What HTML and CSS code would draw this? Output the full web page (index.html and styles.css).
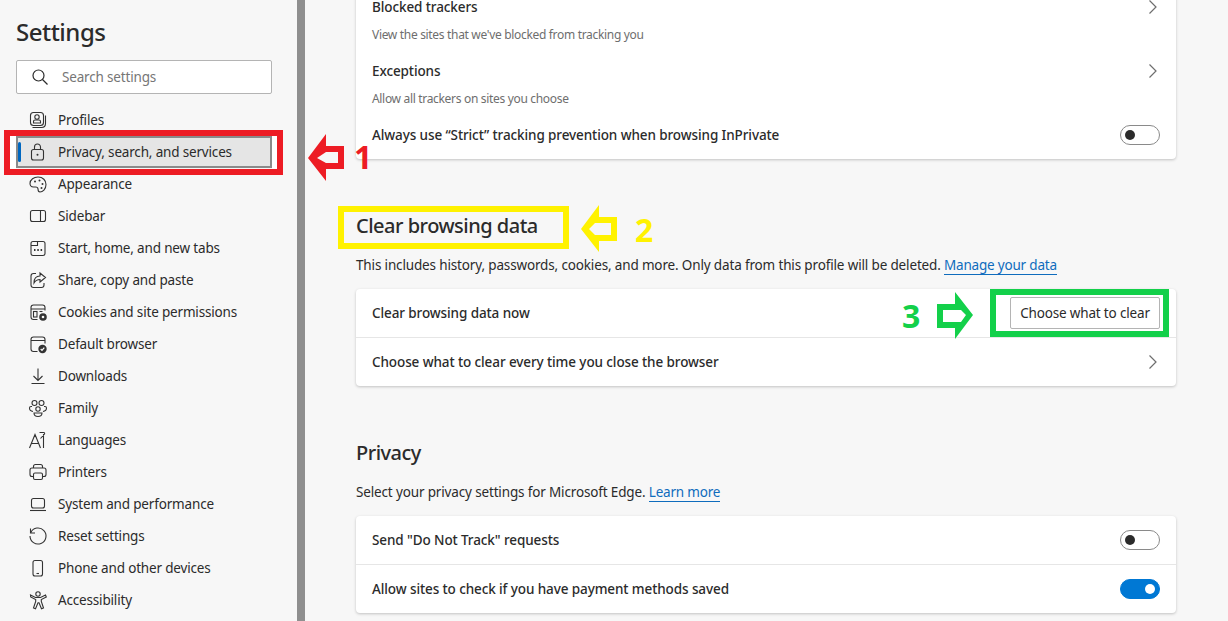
FILE: index.html
```html
<!DOCTYPE html>
<html>
	<head>
		<meta charset="utf-8">
		<title>Settings</title>
		<link rel="stylesheet" href="styles.css">
	</head>
	<body>
		<div class="page">
			<div class="sidebar">
				<div class="sideTitle">Settings</div>
				<div class="search">
					<svg class="searchIcon" width="16" height="16" viewBox="0 0 16 16"><circle cx="6.5" cy="6.5" r="5.5"/><path d="M10.5 10.5L15.5 15.5"/></svg>
					<span>Search settings</span>
				</div>
				<div class="nav">
					<div class="navItem">
						<svg width="20" height="20" viewBox="0 0 20 20"><rect x="2.5" y="2.5" width="13" height="13" rx="3"/><path d="M4.5 17.5h9q4 0 4-4v-8"/><circle cx="9" cy="7" r="2.2"/><path d="M5.5 13v-1.500q0-1.500 1.500-1.500h4q1.500 0 1.500 1.500v1.500z"/></svg>
						<span>Profiles</span>
					</div>
					<div class="navItem navItemOn">
						<svg width="20" height="20" viewBox="0 0 20 20"><rect x="3.500" y="7.500" width="12" height="10.500" rx="2"/><path d="M6.500 7.500v-2.500a3 3 0 0 1 6 0v2.500"/><circle class="dot" cx="9.500" cy="12.800" r="1"/></svg>
						<span>Privacy, search, and services</span>
					</div>
					<div class="navItem">
						<svg width="20" height="20" viewBox="0 0 20 20"><path d="M2 9.500c0-4 4-6.500 8-6.500 5 0 8 3.500 8 7.500 0 5-3.500 7.500-6 7.500-2 0-2-1.500-2-3s-1-2-2.500-2h-2c-2.500 0-3.500-1.500-3.500-3.500z"/><circle class="dot" cx="7" cy="7.500" r="1"/><circle class="dot" cx="11.500" cy="6.500" r="1"/><circle class="dot" cx="14.500" cy="10" r="1"/><circle class="dot" cx="13.500" cy="14" r="1"/></svg>
						<span>Appearance</span>
					</div>
					<div class="navItem">
						<svg width="20" height="20" viewBox="0 0 20 20"><rect x="2.500" y="4.500" width="15" height="11" rx="2"/><path d="M12.500 4.500v11"/></svg>
						<span>Sidebar</span>
					</div>
					<div class="navItem">
						<svg width="20" height="20" viewBox="0 0 20 20"><path d="M5 3.500h10q2 0 2 2v10q0 2-2 2h-10q-2 0-2-2v-10q0-2 2-2zM3 7.500h6.500v-4"/><path class="thick" d="M6 12h1.500M9.300 12h1.500M12.600 12h1.500"/></svg>
						<span>Start, home, and new tabs</span>
					</div>
					<div class="navItem">
						<svg width="20" height="20" viewBox="0 0 20 20"><path d="M8 3.500h-2.500q-2.500 0-2.500 2.500v9q0 2.500 2.500 2.500h8q2.500 0 2.500-2.500v-2"/><path d="M12 3l5.500 4.500-5.500 4.500v-2.500c-3 0-4.500 1-6 3.500 0-4.500 2.500-7 6-7z"/></svg>
						<span>Share, copy and paste</span>
					</div>
					<div class="navItem">
						<svg width="20" height="20" viewBox="0 0 20 20"><path d="M9.500 17.500h-4q-2.500 0-2.500-2.500v-9.500q0-2.500 2.500-2.500h9q2.500 0 2.500 2.500v3M3 7h14"/><rect x="5.500" y="9.500" width="3.500" height="5.500"/><path d="M11.500 9.500h3"/><circle class="dot" cx="15" cy="15" r="3.800"/><circle class="hole" cx="15" cy="15" r="1.300"/></svg>
						<span>Cookies and site permissions</span>
					</div>
					<div class="navItem">
						<svg width="20" height="20" viewBox="0 0 20 20"><path d="M9.500 17.500h-4q-2.500 0-2.500-2.500v-9.500q0-2.500 2.500-2.500h9q2.500 0 2.500 2.500v4M3 6.500h14"/><circle class="dot" cx="14.500" cy="15" r="4.200"/><path class="tick" d="M12.700 15l1.300 1.300 2.300-2.600"/></svg>
						<span>Default browser</span>
					</div>
					<div class="navItem">
						<svg width="20" height="20" viewBox="0 0 20 20"><path d="M10 2.500v12M5.500 10l4.500 4.500 4.500-4.500M3.500 17.500h13"/></svg>
						<span>Downloads</span>
					</div>
					<div class="navItem">
						<svg width="20" height="20" viewBox="0 0 20 20"><circle cx="6.500" cy="5" r="2.500"/><circle cx="13.500" cy="5" r="2.500"/><circle cx="10" cy="11" r="2.200"/><path d="M4 8.500h-1q-1.500 0-1.500 1.500 0 3 3.500 3.500M16 8.500h1q1.500 0 1.500 1.500 0 3-3.500 3.500M6 15h8q0 3.500-4 3.500t-4-3.500z"/></svg>
						<span>Family</span>
					</div>
					<div class="navItem">
						<svg width="20" height="20" viewBox="0 0 20 20"><path d="M1.500 18l5.500-13.500 5.500 13.500M3.500 13.500h7.500M11.500 2.500h4q1.500 0 1 1.500l-4 4.500M15.500 4v14"/></svg>
						<span>Languages</span>
					</div>
					<div class="navItem">
						<svg width="20" height="20" viewBox="0 0 20 20"><path d="M5.500 6v-1.500q0-2 2-2h5q2 0 2 2v1.500M5.500 14.500h-1.500q-2 0-2-2v-4.500q0-2 2-2h12q2 0 2 2v4.500q0 2-2 2h-1.500"/><rect x="5.500" y="11" width="9" height="6.500" rx="1.500"/></svg>
						<span>Printers</span>
					</div>
					<div class="navItem">
						<svg width="20" height="20" viewBox="0 0 20 20"><rect x="3.500" y="4.500" width="13" height="9.500" rx="2"/><path d="M2 16.500h16"/></svg>
						<span>System and performance</span>
					</div>
					<div class="navItem">
						<svg width="20" height="20" viewBox="0 0 20 20"><path d="M2.800 6.500a8 8 0 1 1-.800 3.500M2.500 2.500v4.500h4.500"/></svg>
						<span>Reset settings</span>
					</div>
					<div class="navItem">
						<svg width="20" height="20" viewBox="0 0 20 20"><rect x="5" y="2.500" width="9.500" height="15.500" rx="2"/><path d="M8.500 15.500h2.500"/></svg>
						<span>Phone and other devices</span>
					</div>
					<div class="navItem">
						<svg width="20" height="20" viewBox="0 0 20 20"><circle cx="10" cy="4" r="2.200"/><path d="M2.500 5l5 2.500h5l5-2.500 .800 2-5 2.500v2l2.200 6.500-2 .700-2.500-6h-1l-2.500 6-2-.700 2.200-6.500v-2l-5-2.500z"/></svg>
						<span>Accessibility</span>
					</div>
				</div>
			</div>
			<div class="divider"></div>
			<div class="main">
				<div class="card cardTop">
					<div class="subRow">
						<div class="rowHead"><span class="rowLabel">Blocked trackers</span><svg class="chev" width="10" height="16" viewBox="0 0 10 16"><path d="M1.500 1.500L8 8l-6.500 6.500"/></svg></div>
						<div class="rowSub">View the sites that we've blocked from tracking you</div>
					</div>
					<div class="subRow">
						<div class="rowHead"><span class="rowLabel">Exceptions</span><svg class="chev" width="10" height="16" viewBox="0 0 10 16"><path d="M1.500 1.500L8 8l-6.500 6.500"/></svg></div>
						<div class="rowSub">Allow all trackers on sites you choose</div>
					</div>
					<div class="row">
						<span class="rowLabel">Always use “Strict” tracking prevention when browsing InPrivate</span>
						<div class="toggle"><div class="knob"></div></div>
					</div>
				</div>

				<div class="heading headingClear">Clear browsing data</div>
				<div class="desc">This includes history, passwords, cookies, and more. Only data from this profile will be deleted. <a class="link">Manage your data</a></div>
				<div class="card">
					<div class="row rowLine">
						<span class="rowLabel">Clear browsing data now</span>
						<div class="btn">Choose what to clear</div>
					</div>
					<div class="row">
						<span class="rowLabel">Choose what to clear every time you close the browser</span>
						<svg class="chev" width="10" height="16" viewBox="0 0 10 16"><path d="M1.500 1.500L8 8l-6.500 6.500"/></svg>
					</div>
				</div>

				<div class="heading headingPrivacy">Privacy</div>
				<div class="desc">Select your privacy settings for Microsoft Edge. <a class="link">Learn more</a></div>
				<div class="card">
					<div class="row rowLine">
						<span class="rowLabel">Send "Do Not Track" requests</span>
						<div class="toggle"><div class="knob"></div></div>
					</div>
					<div class="row">
						<span class="rowLabel">Allow sites to check if you have payment methods saved</span>
						<div class="toggle toggleOn"><div class="knob"></div></div>
					</div>
				</div>
			</div>
		</div>

		<!-- red, yellow and green callouts drawn over the page -->
		<div class="mark markRed"><div class="markRedInner"></div></div>
		<div class="mark markYellow"></div>
		<div class="mark markGreen"></div>
		<svg class="arrow arrowRed" width="42" height="54" viewBox="0 0 42 54"><path d="M3 28L21 4V16H39V39H21V51ZM12 28L21 22H33V33H21Z"/></svg>
		<svg class="arrow arrowYellow" width="48" height="56" viewBox="0 0 48 56"><path d="M6 29L24 5V17H42V41H24V52ZM14 29L20 23H36V35H20Z"/></svg>
		<svg class="arrow arrowGreen" width="84" height="58" viewBox="0 0 84 58"><path d="M78 30L60 7V19H42V43H60V54ZM71 30L66 25H48V37H66Z"/></svg>
		<div class="num numRed">1</div>
		<div class="num numYellow">2</div>
		<div class="num numGreen">3</div>
	</body>
</html>
```

FILE: styles.css
```css
html, body{ margin: 0; height: 100%; overflow: hidden; }
body{ background: #f7f7f7; color: #2b2b2b; font-family: "Noto Sans", sans-serif; font-size: 13.5px; letter-spacing: -0.17px; }
.page{ display: flex; height: 621px; overflow: hidden; }

.sidebar{ width: 297px; flex: none; padding: 0 25px 0 16px; box-sizing: border-box; }
.sideTitle{ font-size: 24px; font-weight: 500; line-height: 32px; margin-top: 16px; letter-spacing: -0.5px; }
.search{ display: flex; align-items: center; height: 34px; margin-top: 12px; box-sizing: border-box; border: 1px solid #b4b4b4; border-radius: 2px; background: white; color: #767676; padding-left: 15px; }
.search span{ margin-left: 14px; }
.searchIcon{ fill: none; stroke: #2b2b2b; stroke-width: 1.2; }

.nav{ margin-top: 10px; }
.navItem{ display: flex; align-items: center; height: 32px; box-sizing: border-box; padding-left: 12px; position: relative; }
.navItem span{ margin-left: 10px; }
.navItem svg{ fill: none; stroke: #333333; stroke-width: 1.1; flex: none; }
.navItem svg .dot{ fill: #333333; stroke: none; }
.navItem svg .hole{ fill: #f7f7f7; stroke: none; }
.navItem svg .tick{ stroke: white; stroke-width: 1.2; }
.navItem svg .thick{ stroke-width: 1.8; }
.navItemOn{ background: #e5e5e5; border: 2px solid #8a8a8a; padding-left: 10px; z-index: 3; }
.navItemOn::before{ content: ""; position: absolute; left: 0; top: 4px; width: 3px; height: 20px; background: #0067c0; border-radius: 2px; }

.divider{ width: 8px; flex: none; background: #8f8f8f; }

.main{ width: 820px; flex: none; margin-left: 51px; }
.card{ background: white; border-radius: 4px; box-shadow: 0 1px 3px rgba(0,0,0,0.22); }
.cardTop{ margin-top: -17px; }
.subRow{ height: 64px; padding: 0 16px; }
.rowHead{ display: flex; justify-content: space-between; align-items: center; height: 48px; }
.rowSub{ color: #6e6e6e; font-size: 12px; line-height: 16px; margin-top: -4px; letter-spacing: -0.32px; }
.row{ display: flex; justify-content: space-between; align-items: center; height: 48px; padding: 0 16px; box-sizing: content-box; }
.rowLine{ border-bottom: 1px solid #e6e6e6; }
.rowLabel{ font-weight: 500; letter-spacing: -0.1px; }
.chev{ fill: none; stroke: #6e6e6e; stroke-width: 1.2; margin-right: 2px; }

.heading{ font-size: 20px; font-weight: 500; line-height: 28px; letter-spacing: -0.5px; }
.headingClear{ margin-top: 53px; }
.headingPrivacy{ margin-top: 53px; }
.desc{ line-height: 20px; margin-top: 15px; margin-bottom: 14px; letter-spacing: -0.15px; }
.link{ color: #0f6cbd; border-bottom: 1px solid #0f6cbd; letter-spacing: -0.2px; }

.toggle{ width: 40px; height: 20px; box-sizing: border-box; border: 1px solid #8a8a8a; border-radius: 10px; background: white; display: flex; align-items: center; padding-left: 4px; }
.knob{ width: 10px; height: 10px; border-radius: 5px; background: #2b2b2b; }
.toggleOn{ background: #0078d4; border-color: #0078d4; justify-content: flex-end; padding: 0 4px 0 0; }
.toggleOn .knob{ background: white; }

.btn{ background: white; border: 1px solid #b4b4b4; border-radius: 2px; height: 32px; width: 150px; box-sizing: border-box; text-align: center; line-height: 30px; }

.mark{ position: absolute; box-sizing: border-box; }
.markRed{ left: 4px; top: 130px; width: 279px; height: 45px; border: 6px solid #ed1c24; z-index: 2; }
.markRedInner{ position: absolute; left: 0; top: 0; right: 0; bottom: 0; border-style: solid; border-color: white; border-width: 1px 5px 0 6px; }
.markYellow{ left: 338px; top: 206px; width: 231px; height: 43px; border: 6px solid #fff200; }
.markGreen{ left: 990px; top: 289px; width: 179px; height: 48px; border: 6px solid #13d04a; }
.arrow{ position: absolute; fill-rule: evenodd; }
.arrowRed{ left: 305px; top: 130px; fill: #ed1c24; }
.arrowYellow{ left: 575px; top: 200px; fill: #fff200; }
.arrowGreen{ left: 895px; top: 285px; fill: #13d04a; }
.num{ position: absolute; font-size: 32px; font-weight: 700; line-height: 34px; letter-spacing: 0; }
.numRed{ left: 354px; top: 140px; color: #ed1c24; }
.numYellow{ left: 635px; top: 213px; color: #fff200; }
.numGreen{ left: 902px; top: 299px; color: #13d04a; }
```
